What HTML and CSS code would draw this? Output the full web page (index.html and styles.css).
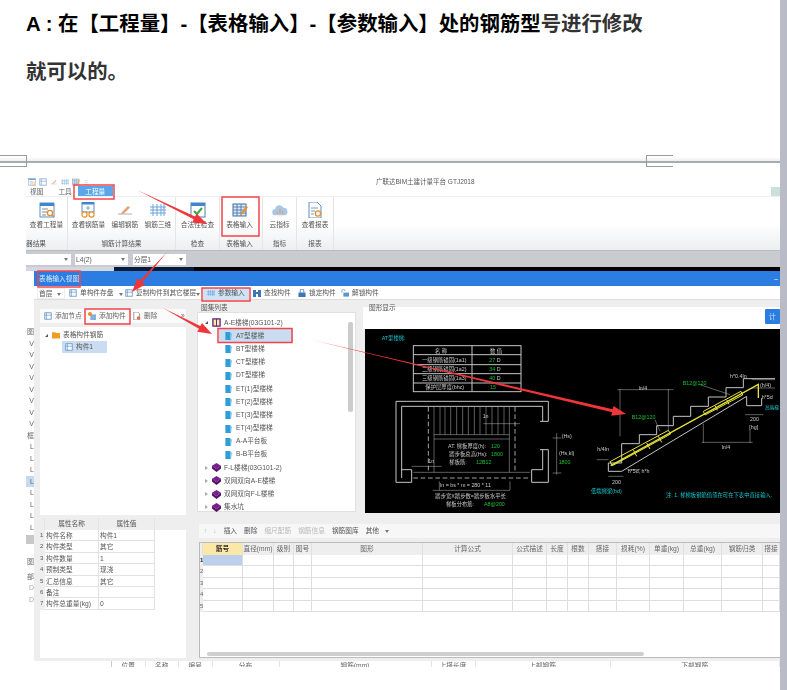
FILE: index.html
```html
<!DOCTYPE html>
<html lang="zh-CN">
<head>
<meta charset="utf-8">
<title>表格输入</title>
<link rel="stylesheet" href="styles.css">
</head>
<body>
<svg class="defs" aria-hidden="true">
  <symbol id="i-table" viewBox="0 0 16 16"><rect x="1" y="1" width="14" height="14" fill="#fff" stroke="#5b8fc4"/><rect x="1" y="1" width="14" height="3" fill="#3f87cf"/><path d="M3 7h6M3 10h5M3 13h4" stroke="#7a8a9a"/><circle cx="11" cy="11" r="2.6" fill="none" stroke="#e8912d" stroke-width="1.4"/><path d="M13 13l2 2" stroke="#e8912d" stroke-width="1.4"/></symbol>
  <symbol id="i-glasses" viewBox="0 0 16 16"><rect x="2" y="0" width="12" height="10" fill="#fff" stroke="#5b8fc4"/><rect x="2" y="0" width="12" height="2.5" fill="#3f87cf"/><path d="M8 4v4M6 6h4" stroke="#8aa"/><circle cx="4.5" cy="12.5" r="2.6" fill="#fff" stroke="#e8912d" stroke-width="1.2"/><circle cx="11.5" cy="12.5" r="2.6" fill="#fff" stroke="#e8912d" stroke-width="1.2"/></symbol>
  <symbol id="i-edit" viewBox="0 0 16 16"><path d="M1 12h14" stroke="#bbb" stroke-width="1.2"/><path d="M5 10l6-6 2 1.6-6 6-3 .6z" fill="#e8a070"/></symbol>
  <symbol id="i-3d" viewBox="0 0 16 16"><path d="M0 5h16M0 8h16M0 11h16M3 2v12M7 2v12M11 2v12M14 2v12" stroke="#6aa3da" fill="none"/></symbol>
  <symbol id="i-check" viewBox="0 0 16 16"><rect x="1" y="1" width="14" height="14" fill="#fff" stroke="#4f7fae"/><rect x="1" y="1" width="14" height="3" fill="#3f87cf"/><path d="M4 9l3 3 5-6" fill="none" stroke="#3aa64a" stroke-width="2"/></symbol>
  <symbol id="i-input" viewBox="0 0 16 16"><rect x="1" y="2" width="13" height="12" fill="#dbe8f5" stroke="#3f6fa3"/><path d="M1 5h13M1 8h13M1 11h13M5 2v12M9 2v12" stroke="#3f6fa3" stroke-width=".8"/><path d="M9 11l5-7 2 1-5 7-2.400 .6z" fill="#e8912d"/></symbol>
  <symbol id="i-cloud" viewBox="0 0 18 14"><path d="M4 13a3.500 3.500 0 0 1-.5-7 5 5 0 0 1 9.500-1.500 4.300 4.300 0 0 1 1 8.500z" fill="#a9c8e8"/><path d="M6 11V9M9 11V6M12 11V8" stroke="#e89a5a" stroke-width="1.400"/></symbol>
  <symbol id="i-report" viewBox="0 0 16 16"><path d="M2 0h8l4 4v12H2z" fill="#fff" stroke="#5b8fc4"/><path d="M4 6h7M4 9h4M4 12h3" stroke="#7a9abb"/><circle cx="11" cy="11.500" r="2.600" fill="none" stroke="#e8912d" stroke-width="1.400"/></symbol>
  <symbol id="i-doc" viewBox="0 0 10 10"><rect x="1" y="1" width="8" height="8" fill="#fff" stroke="#5b8fc4"/><path d="M3 1v8M1 4h8" stroke="#5b8fc4" stroke-width=".8"/></symbol>
  <symbol id="i-add" viewBox="0 0 10 10"><rect x="3" y="3" width="7" height="7" fill="#7fb0e0"/><circle cx="2.500" cy="2.500" r="2.500" fill="#ed8a22"/></symbol>
  <symbol id="i-del" viewBox="0 0 10 10"><path d="M1 0h5l2 2v8H1z" fill="#fff" stroke="#888"/><circle cx="7" cy="7.500" r="2.300" fill="#e5704e"/></symbol>
  <symbol id="i-folder" viewBox="0 0 10 9"><path d="M0 1h4l1 1h5v7H0z" fill="#f59b23"/></symbol>
  <symbol id="i-page" viewBox="0 0 9 10"><path d="M1 1h5l2 2-1 7H1z" fill="#2f9ed8"/><path d="M7 2v7" stroke="#9bd4ee"/></symbol>
  <symbol id="i-book" viewBox="0 0 10 10"><path d="M0 3l5-3 5 3-5 4z" fill="#7a1f8f"/><path d="M0 3v3l5 4 5-4V3L5 7z" fill="#541066"/></symbol>
  <symbol id="i-open" viewBox="0 0 10 10"><rect x="1" y="1" width="8" height="8" fill="#f6e9a8" stroke="#5b1a78" stroke-width="1.400"/><path d="M5 1v8" stroke="#5b1a78"/></symbol>
  <symbol id="i-find" viewBox="0 0 8 8"><rect x="0" y="1" width="3" height="7" fill="#3c76b6"/><rect x="5" y="1" width="3" height="7" fill="#3c76b6"/><rect x="2" y="3" width="4" height="2" fill="#3c76b6"/></symbol>
  <symbol id="i-lock" viewBox="0 0 8 9"><rect x="0" y="4" width="8" height="5" fill="#3c76b6"/><path d="M2 4V2a2 2 0 0 1 4 0v2" fill="none" stroke="#3c76b6"/></symbol>
  <symbol id="i-unlock" viewBox="0 0 10 9"><rect x="3" y="4" width="7" height="5" fill="#5d95cf"/><path d="M1 4V2a2 2 0 0 1 4 0" fill="none" stroke="#5d95cf"/></symbol>
</svg>

<div class="window">
  <main class="main">
    <section class="answer">
      <p class="line"><b class="strong">A : 在【工程量】-【表格输入】-【参数输入】处的钢筋型</b><b class="soft">号进行修改</b></p>
      <p class="line"><b class="soft">就可以的。</b></p>
    </section>

    <div class="page-break">
      <span class="corner"></span>
      <span class="corner corner-right"></span>
    </div>

    <figure class="shot">
      <div class="qbar">
        <div class="qicons">
          <svg class="qi"><use href="#i-table"/></svg>
          <svg class="qi"><use href="#i-doc"/></svg>
          <svg class="qi"><use href="#i-edit"/></svg>
          <svg class="qi"><use href="#i-3d"/></svg>
          <svg class="qi"><use href="#i-input"/></svg>
          <span class="qmore">⋮</span>
        </div>
        <span class="apptitle">广联达BIM土建计量平台 GTJ2018</span>
      </div>

      <div class="tabs">
        <span class="tab">视图</span>
        <span class="tab tab-tool">工具</span>
        <span class="tab tab-on">工程量</span>
        <span class="tab-flag"></span>
      </div>

      <div class="ribbon">
        <div class="rgroup g1">
          <div class="ritems"><div class="ritem"><svg class="ri"><use href="#i-table"/></svg><span>查看工程量</span></div></div>
          <div class="rtitle rtitle-left">器结果</div>
        </div>
        <div class="rgroup g2">
          <div class="ritems">
            <div class="ritem"><svg class="ri"><use href="#i-glasses"/></svg><span>查看钢筋量</span></div>
            <div class="ritem"><svg class="ri"><use href="#i-edit"/></svg><span>编辑钢筋</span></div>
            <div class="ritem"><svg class="ri"><use href="#i-3d"/></svg><span>钢筋三维</span></div>
          </div>
          <div class="rtitle">钢筋计算结果</div>
        </div>
        <div class="rgroup g3">
          <div class="ritems"><div class="ritem"><svg class="ri"><use href="#i-check"/></svg><span>合法性检查</span></div></div>
          <div class="rtitle">检查</div>
        </div>
        <div class="rgroup g4">
          <div class="ritems"><div class="ritem"><svg class="ri"><use href="#i-input"/></svg><span>表格输入</span></div></div>
          <div class="rtitle">表格输入</div>
        </div>
        <div class="rgroup g5">
          <div class="ritems"><div class="ritem"><svg class="ri"><use href="#i-cloud"/></svg><span>云指标</span></div></div>
          <div class="rtitle">指标</div>
        </div>
        <div class="rgroup g6">
          <div class="ritems"><div class="ritem"><svg class="ri"><use href="#i-report"/></svg><span>查看报表</span></div></div>
          <div class="rtitle">报表</div>
        </div>
      </div>

      <div class="combos">
        <span class="combo c1"><i class="caret"></i></span>
        <span class="combo c2">L4(2)<i class="caret"></i></span>
        <span class="combo c3">分层1<i class="caret"></i></span>
      </div>
      <div class="strip"><span class="s1"></span><span class="s2"></span><span class="s3"></span></div>

      <div class="work">
        <div class="side">
          <span class="side-a">图</span>
          <span>V</span><span>V</span><span>V</span><span>V</span><span>V</span><span>V</span><span>V</span><span>V</span>
          <span>框</span>
          <span>L</span><span>L</span><span>L</span><span class="side-on">L</span><span>L</span><span>L</span><span>L</span><span>L</span>
          <span class="side-bar"></span>
          <span class="side-b">图</span>
          <span class="side-c">部</span>
          <span class="side-d">D</span>
          <span class="side-d">D</span>
        </div>

        <div class="dialog">
          <div class="dtitle"><span>表格输入视图</span><span class="dmin">–</span></div>
          <div class="dtools">
            <span class="dcombo">首层<i class="caret"></i></span>
            <span class="dt dt1"><svg class="si"><use href="#i-doc"/></svg>单构件存盘<i class="caret caret-far"></i></span>
            <span class="dt dt2"><svg class="si"><use href="#i-doc"/></svg>复制构件到其它楼层<i class="caret"></i></span>
            <span class="dt dt3"><svg class="si"><use href="#i-3d"/></svg>参数输入</span>
            <span class="dt dt4"><svg class="si"><use href="#i-find"/></svg>查找构件</span>
            <span class="dt dt5"><svg class="si"><use href="#i-lock"/></svg>锁定构件</span>
            <span class="dt dt6"><svg class="si"><use href="#i-unlock"/></svg>解锁构件</span>
          </div>

          <div class="dbody">
            <div class="leftcol">
              <div class="ltools">
                <span class="lt"><svg class="si"><use href="#i-doc"/></svg>添加节点</span>
                <span class="lt lt2"><svg class="si"><use href="#i-add"/></svg>添加构件</span>
                <span class="lt lt3"><svg class="si"><use href="#i-del"/></svg>删除</span>
                <span class="lmore">»</span>
              </div>
              <div class="ltree">
                <div class="lrow"><i class="tri-open"></i><svg class="si"><use href="#i-folder"/></svg>表格构件钢筋</div>
                <div class="lrow lrow-sel"><svg class="si"><use href="#i-doc"/></svg>构件1</div>
              </div>
              <div class="props">
                <div class="p-h"></div><div class="p-h">属性名称</div><div class="p-h">属性值</div><div class="p-h p-end"></div>
                <div class="p-n">1</div><div class="p-c">构件名称</div><div class="p-c">构件1</div><div class="p-e"></div>
                <div class="p-n">2</div><div class="p-c">构件类型</div><div class="p-c">其它</div><div class="p-e"></div>
                <div class="p-n">3</div><div class="p-c">构件数量</div><div class="p-c">1</div><div class="p-e"></div>
                <div class="p-n">4</div><div class="p-c">预制类型</div><div class="p-c">现浇</div><div class="p-e"></div>
                <div class="p-n">5</div><div class="p-c">汇总信息</div><div class="p-c">其它</div><div class="p-e"></div>
                <div class="p-n">6</div><div class="p-c">备注</div><div class="p-c"></div><div class="p-e"></div>
                <div class="p-n">7</div><div class="p-c">构件总重量(kg)</div><div class="p-c">0</div><div class="p-e"></div>
              </div>
            </div>

            <div class="rightcol">
              <div class="upper">
                <div class="atlas">
                  <div class="legend">图集列表</div>
                  <div class="atlas-list">
                    <div class="arow arow-top"><i class="tri-open"></i><svg class="si"><use href="#i-open"/></svg>A-E楼梯(03G101-2)</div>
                    <div class="arow arow-leaf arow-sel"><svg class="si"><use href="#i-page"/></svg>AT型楼梯</div>
                    <div class="arow arow-leaf"><svg class="si"><use href="#i-page"/></svg>BT型楼梯</div>
                    <div class="arow arow-leaf"><svg class="si"><use href="#i-page"/></svg>CT型楼梯</div>
                    <div class="arow arow-leaf"><svg class="si"><use href="#i-page"/></svg>DT型楼梯</div>
                    <div class="arow arow-leaf"><svg class="si"><use href="#i-page"/></svg>ET(1)型楼梯</div>
                    <div class="arow arow-leaf"><svg class="si"><use href="#i-page"/></svg>ET(2)型楼梯</div>
                    <div class="arow arow-leaf"><svg class="si"><use href="#i-page"/></svg>ET(3)型楼梯</div>
                    <div class="arow arow-leaf"><svg class="si"><use href="#i-page"/></svg>ET(4)型楼梯</div>
                    <div class="arow arow-leaf"><svg class="si"><use href="#i-page"/></svg>A-A平台板</div>
                    <div class="arow arow-leaf"><svg class="si"><use href="#i-page"/></svg>B-B平台板</div>
                    <div class="arow arow-top"><i class="tri-closed"></i><svg class="si"><use href="#i-book"/></svg>F-L楼梯(03G101-2)</div>
                    <div class="arow arow-top"><i class="tri-closed"></i><svg class="si"><use href="#i-book"/></svg>双网双向A-E楼梯</div>
                    <div class="arow arow-top"><i class="tri-closed"></i><svg class="si"><use href="#i-book"/></svg>双网双向F-L楼梯</div>
                    <div class="arow arow-top"><i class="tri-closed"></i><svg class="si"><use href="#i-book"/></svg>集水坑</div>
                    <span class="vscroll"></span>
                  </div>
                </div>

                <div class="figure">
                  <div class="legend legend-fig">图形显示</div>
                  <div class="figbar"><span class="figbtn">计</span></div>
                  <svg class="cad" viewBox="15 88 1245 552" preserveAspectRatio="none">
                    <g class="cad-w">
                      <rect x="160" y="138" width="323" height="138"/>
                      <path d="M160 165H483M160 195H483M160 222H483M160 250H483M336 138V276"/>
                      <path d="M108 548V305H565V365M125 535V320H548V365M108 548H155V510H125M565 450V548H515V510H548V450M540 365H565M540 450H565"/>
                      <path class="thin" d="M222 322V518M222 405H448M222 418H448M240 322V405M255 322V405M272 322V405M290 322V405M308 322V405M325 322V405M343 322V405M360 322V405M378 322V405M396 322V405M414 322V405M432 322V405M448 322V518M160 518H510"/>
                      <path class="dash" d="M205 322V518M465 322V518M160 535H510"/>
                      <path class="thin" d="M370 372H480M155 500H245M218 572H450M238 545V572M450 545V572M590 400V525M578 415H604M578 520H604"/>
                      <path d="M745 515V490H785V432H838V405H890V378H940V350H992V320H1045V292H1098V264H1150V237H1245"/>
                      <path d="M745 515H785L1160 290V318H1205V295"/>
                      <path class="thin" d="M780 268V410M925 268V395M772 270H940M1030 372V430M1170 390V430M1025 428H1178M745 530H790M1155 345H1210M1175 240H1245M1175 265H1245M885 360L900 395M1020 255L1110 285M710 480H745M800 510H840"/>
                    </g>
                    <path class="cad-y" d="M752 498L1195 254V295"/>
                    <path class="cad-yb" d="M750 486L925 392L932 403L757 498ZM785 480L790 476M820 450L830 470M860 430L870 448M895 410L905 428M1030 335L1143 275L1148 286L1035 346ZM1065 318L1072 332M1100 300L1107 314"/>
                    <g class="cad-t">
                      <text class="c-cy" x="65" y="122">AT型楼梯:</text>
                      <text x="225" y="160">名 称</text><text x="390" y="160">数 值</text>
                      <text x="186" y="188">一级钢筋锚固(1a1)</text><text class="c-gr" x="388" y="188">27</text><text x="410" y="188">D</text>
                      <text x="186" y="215">二级钢筋锚固(1a2)</text><text class="c-gr" x="388" y="215">34</text><text x="410" y="215">D</text>
                      <text x="186" y="242">三级钢筋锚固(1a3)</text><text class="c-gr" x="388" y="242">40</text><text x="410" y="242">D</text>
                      <text x="196" y="269">保护层厚度(bhc)</text><text class="c-gr" x="390" y="269">15</text>
                      <text x="264" y="446">AT. 梯板厚度(h):</text><text class="c-gr" x="393" y="446">120</text>
                      <text x="268" y="470">踏步板总高(Hs):</text><text class="c-gr" x="393" y="470">1800</text>
                      <text x="268" y="494">梯板筋:</text><text class="c-gr" x="348" y="494">12B12</text>
                      <text x="240" y="562">ln = bs * m = 280 * 11</text>
                      <text x="226" y="595">踏步宽X踏步数=踏步板水平长</text>
                      <text x="258" y="620">梯板分布筋:</text><text class="c-gr" x="372" y="620">A8@200</text>
                      <text x="605" y="416">(Hs)</text><text x="597" y="465">(Hs,kl)</text><text class="c-gr" x="596" y="492">1800</text>
                      <text x="205" y="490">1n</text><text x="368" y="356">1n</text>
                      <text class="c-gr" x="815" y="357">B12@120</text><text class="c-gr" x="968" y="256">B12@120</text>
                      <text x="836" y="270">ln/4</text><text x="1085" y="448">ln/4</text>
                      <text x="1110" y="235">h*0.4ln</text><text x="1200" y="262">(h/4)</text><text x="1205" y="298">h*5d</text>
                      <text x="712" y="453">h/4ln</text><text x="803" y="521">h*5d, h*h</text>
                      <text x="756" y="552">200</text><text x="1170" y="364">200</text><text x="1168" y="388">[hg]</text>
                      <text class="c-cy" x="693" y="580">低端梯梁(bd)</text>
                      <text class="c-cy c-short" x="1215" y="329">高端梯</text>
                      <text class="c-cy" x="918" y="592">注: 1. 梯梯板钢筋值须在可在下表中直接输入.</text>
                    </g>
                  </svg>
                </div>
              </div>

              <div class="gtools">
                <span class="gt g-arrow">↑</span><span class="gt g-arrow">↓</span>
                <span class="gt g-first">插入</span><span class="gt">删除</span>
                <span class="gt g-off">缩尺配筋</span><span class="gt g-off">钢筋信息</span>
                <span class="gt">钢筋图库</span><span class="gt">其他 <i class="caret caret-near"></i></span>
              </div>

              <div class="sheet">
                <div class="sgrid">
                  <div class="sh"></div><div class="sh sh-on">筋号</div><div class="sh">直径(mm)</div><div class="sh">级别</div><div class="sh">图号</div><div class="sh">图形</div><div class="sh">计算公式</div><div class="sh">公式描述</div><div class="sh">长度</div><div class="sh">根数</div><div class="sh">搭接</div><div class="sh">损耗(%)</div><div class="sh">单重(kg)</div><div class="sh">总重(kg)</div><div class="sh">钢筋归类</div><div class="sh">搭接</div>
                  <div class="sn sn-on">1</div><div class="sc sc-on"></div><div class="sc"></div><div class="sc"></div><div class="sc"></div><div class="sc"></div><div class="sc"></div><div class="sc"></div><div class="sc"></div><div class="sc"></div><div class="sc"></div><div class="sc"></div><div class="sc"></div><div class="sc"></div><div class="sc"></div><div class="sc"></div>
                  <div class="sn">2</div><div class="sc"></div><div class="sc"></div><div class="sc"></div><div class="sc"></div><div class="sc"></div><div class="sc"></div><div class="sc"></div><div class="sc"></div><div class="sc"></div><div class="sc"></div><div class="sc"></div><div class="sc"></div><div class="sc"></div><div class="sc"></div><div class="sc"></div>
                  <div class="sn">3</div><div class="sc"></div><div class="sc"></div><div class="sc"></div><div class="sc"></div><div class="sc"></div><div class="sc"></div><div class="sc"></div><div class="sc"></div><div class="sc"></div><div class="sc"></div><div class="sc"></div><div class="sc"></div><div class="sc"></div><div class="sc"></div><div class="sc"></div>
                  <div class="sn">4</div><div class="sc"></div><div class="sc"></div><div class="sc"></div><div class="sc"></div><div class="sc"></div><div class="sc"></div><div class="sc"></div><div class="sc"></div><div class="sc"></div><div class="sc"></div><div class="sc"></div><div class="sc"></div><div class="sc"></div><div class="sc"></div><div class="sc"></div>
                  <div class="sn">5</div><div class="sc"></div><div class="sc"></div><div class="sc"></div><div class="sc"></div><div class="sc"></div><div class="sc"></div><div class="sc"></div><div class="sc"></div><div class="sc"></div><div class="sc"></div><div class="sc"></div><div class="sc"></div><div class="sc"></div><div class="sc"></div><div class="sc"></div>
                </div>
                <div class="hscroll"></div>
              </div>
            </div>
          </div>
        </div>
      </div>

      <div class="under">
        <span class="u u1">位置</span><span class="u u1">名称</span><span class="u u1">编号</span>
        <span class="u u2">分布</span><span class="u u3">钢筋(mm)</span><span class="u u4">上搭长度</span><span class="u u5">上部钢筋</span><span class="u u6">下部钢筋</span>
      </div>

      <svg class="marks" viewBox="26 163 754 504" aria-hidden="true">
        <g class="box">
          <rect x="74" y="185" width="40" height="14"/>
          <rect x="222" y="197" width="37" height="39"/>
          <rect x="38" y="271" width="42" height="16"/>
          <rect x="202" y="288" width="48" height="13"/>
          <rect x="85" y="309" width="45" height="15"/>
          <rect x="218" y="328.500" width="74" height="14"/>
        </g>
        <g class="arrow">
          <polygon points="137,190 195,216.500 196.600,213.400 207,224 192.200,222.400 193.700,219.300"/>
          <polygon points="167,252 142.300,282.500 145,284.800 132,292 137.400,278.200 140.100,280.500"/>
          <polygon points="163,308 200.300,326 202,323 212,334 197.300,331.800 198.900,328.700"/>
          <polygon points="312,340 612.700,409.300 613.500,405.900 626,414 611.200,415.700 612.100,412.300"/>
        </g>
      </svg>
    </figure>
  </main>
  <aside class="rail"></aside>
</div>
</body>
</html>
```
FILE: styles.css
```css
* { box-sizing: border-box; }
html, body { margin: 0; padding: 0; background: #fff; overflow: hidden; }
body { font-family: "Liberation Sans", "Noto Sans CJK SC", sans-serif; color: #444; }
.defs { position: absolute; width: 0; height: 0; }
.window { display: flex; width: 787px; height: 690px; overflow: hidden; }
.main { width: 780px; flex: none; overflow: hidden; }
.rail { width: 7px; flex: none; background: #b9bbc7; }

.answer { height: 157px; padding: 0 0 0 26px; }
.line { margin: 0; height: 48px; line-height: 48px; font-size: 20.400px; white-space: nowrap; }
.strong { color: #000; font-weight: 700; }
.soft { color: #333; font-weight: 700; }

.page-break { position: relative; z-index: 1; height: 6px; border-bottom: 2px solid #a9abb3; background: linear-gradient(#fff, #eee); }
.corner { position: absolute; left: 0; top: -2px; width: 27px; height: 12px; border: 1px solid #9a9a9a; border-left: 0; }
.corner-right { left: 646px; border-left: 1px solid #9a9a9a; border-right: 0; }

.shot { position: relative; margin: 0 0 0 26px; width: 754px; height: 504px; overflow: hidden; filter: blur(.7px); font-size: 6.7px; line-height: 8px; white-space: nowrap; background: #fff; }
.marks { position: absolute; left: 0; top: 0; width: 754px; height: 504px; }
.box rect { fill: none; stroke: #f2454a; stroke-width: 1.500; }
.arrow polygon { fill: #f0353b; }

.qbar { height: 23px; padding: 14px 0 0 2px; display: flex; }
.qicons { display: flex; gap: 3px; align-items: center; width: 348px; height: 9px; opacity: .75; }
.qi { width: 8px; height: 8px; }
.qmore { font-size: 6px; color: #777; }
.apptitle { color: #555; font-size: 6.500px; line-height: 9px; }

.tabs { display: flex; position: relative; height: 11px; padding-left: 4px; border-bottom: 1px solid #eceff0; line-height: 11px; color: #666; }
.tab-tool { margin-left: 15px; }
.tab-on { margin-left: 6px; width: 35px; text-align: center; color: #fff; background: #5ba6ea; }
.tab-flag { position: absolute; right: 0; top: 1px; width: 9px; height: 9px; background: #c9e1d8; }

.ribbon { display: flex; height: 54px; border-bottom: 1px solid #b9bcbf; background: linear-gradient(#fff 0, #fff 50%, #eceef0 100%); }
.rgroup { display: flex; flex-direction: column; justify-content: space-between; border-right: 1px solid #e3e5e7; padding-top: 5px; }
.ritems { display: flex; gap: 6.300px; justify-content: center; }
.ritem { display: flex; flex-direction: column; align-items: center; gap: 3px; color: #555; }
.ri { width: 16px; height: 16px; }
.rtitle { height: 10px; text-align: center; color: #555; }
.rtitle-left { text-align: left; }
.g1 { width: 42px; }
.g2 { width: 108px; }
.g3 { width: 44px; }
.g4 { width: 43px; padding-right: 3px; }
.g5 { width: 34px; }
.g6 { width: 37px; }

.combos { display: flex; height: 16px; padding-top: 3px; gap: 4px; background: #c8cbd0; }
.combo { position: relative; height: 11px; padding-left: 1px; background: #fff; line-height: 11px; color: #555; }
.c1 { width: 45px; }
.c2 { width: 53px; }
.c3 { width: 53px; margin-left: 1px; }
.caret { position: absolute; right: 3px; top: 4px; border: 2px solid transparent; border-top: 3px solid #777; border-bottom: 0; }

.strip { display: flex; height: 4px; }
.s1 { width: 88px; background: #d4d8de; }
.s2 { width: 80px; background: #0c1a3a; }
.s3 { flex: 1; background: #000; }

.work { display: flex; height: 390px; }
.side { width: 8px; flex: none; display: flex; flex-direction: column; padding-top: 55px; font-size: 7px; line-height: 11.500px; text-align: right; overflow: hidden; color: #666; }
.side span { display: block; height: 11.500px; flex: none; overflow: hidden; }
.side .side-on { background: #c5d9f1; }
.side .side-bar { height: 9px; margin-top: 2px; background: #c8c8c8; }
.side .side-b { margin-top: 12px; }
.side .side-c { margin-top: 3px; }
.side .side-d { margin-top: 0; color: #aaa; }

.dialog { width: 746px; flex: none; display: flex; flex-direction: column; background: #eeeeee; }
.dtitle { height: 15px; padding: 3px 0 0 5px; display: flex; justify-content: space-between; background: #2b7de1; color: #d9e8fa; line-height: 9px; }
.dmin { color: #fff; padding-right: 2px; }
.dtools { height: 14px; padding: 1px 0 0 3px; display: flex; align-items: center; background: #fff; border-bottom: 1px solid #ddd; color: #555; }
.dcombo { position: relative; width: 28px; height: 11px; padding: 1px 0 0 1px; border: 1px solid #eee; }
.dt { position: relative; display: flex; align-items: center; }
.si { width: 8px; height: 8px; margin-right: 3px; flex: none; }
.dt1 { margin-left: 4px; width: 56px; }
.dt1 .caret-far { right: 2px; }
.dt2 { width: 78px; }
.dt3 { margin-left: 0; width: 46px; height: 11px; padding-left: 4px; background: #cfe3f7; }
.dt4 { margin-left: 4px; width: 45px; }
.dt5 { width: 43px; }
.dt6 { width: 44px; }

.dbody { flex: 1; display: flex; gap: 9px; padding: 0 0 3px 6px; min-height: 0; }
.leftcol { width: 146px; flex: none; display: flex; flex-direction: column; padding-top: 9px; }
.ltools { height: 14px; display: flex; align-items: center; padding-left: 4px; background: #fbfbfb; color: #666; position: relative; }
.lt { display: flex; align-items: center; width: 44px; }
.lt2 { width: 45px; }
.lt3 { width: 30px; }
.lmore { margin-left: 18px; }
.ltree { height: 188px; margin-top: 4px; padding-top: 2px; background: #fff; }
.lrow { height: 12px; display: flex; align-items: center; padding-left: 5px; color: #555; }
.lrow .si { margin-right: 3px; }
.tri-open { width: 0; height: 0; margin-right: 4px; border-left: 3px solid transparent; border-bottom: 3px solid #555; }
.tri-closed { width: 0; height: 0; margin-right: 4px; border: 2.500px solid transparent; border-left: 3px solid #aaa; border-right: 0; }
.lrow-sel { width: 45px; margin-left: 22px; padding-left: 3px; background: #c9dcf2; }
.props { flex: 1; margin-top: 3px; display: grid; grid-template-columns: 5px 54px 56px 31px; grid-template-rows: 12px repeat(7, 11.400px) 1fr; background: #fff; color: #555; }
.p-h { background: #eee; text-align: center; line-height: 12px; border-right: 1px solid #e4e4e4; }
.p-end { border-right: 0; }
.p-n { background: #eee; font-size: 6px; line-height: 11.400px; overflow: hidden; }
.p-c { padding-left: 1px; line-height: 11px; border-right: 1px solid #e2e2e2; border-bottom: 1px solid #e2e2e2; }
.p-e { background: #fff; }

.rightcol { flex: 1; min-width: 0; display: flex; flex-direction: column; padding-top: 3px; }
.upper { height: 211px; display: flex; gap: 7px; }
.atlas { position: relative; width: 163px; padding: 9px 2px 2px; flex: none; }
.legend { position: absolute; left: 6px; top: 1px; color: #555; }
.atlas-list { position: relative; height: 200px; padding-top: 3px; background: #fff; border: 1px solid #e0e0e0; color: #555; }
.arow { height: 13.200px; display: flex; align-items: center; }
.arow-top { padding-left: 7px; }
.arow-leaf { padding-left: 26px; }
.arow .si { width: 9px; height: 9px; margin-right: 3px; }
.arow-sel { margin: 0 62px 0 21px; padding-left: 5px; background: #c9dcf2; }
.vscroll { position: absolute; left: 150px; top: 9px; width: 5px; height: 90px; background: #ccc; border-radius: 2px; }

.figure { position: relative; flex: 1; min-width: 0; display: flex; flex-direction: column; padding-top: 4px; }
.legend-fig { left: 4px; top: 1px; z-index: 1; }
.figbar { height: 22px; padding: 2px 0 0 402px; background: #fff; margin-left: -2px; }
.figbtn { display: block; width: 15px; height: 15px; padding: 4px 0 0 4px; background: #2b7de1; color: #cfe3f8; border-radius: 1px; }
.cad { display: block; width: 415px; height: 184px; background: #000; }
.cad-w { fill: none; stroke: #c4c4c4; stroke-width: 3; }
.cad-w .thin { stroke-width: 1.500; stroke: #bbb; }
.cad-w .dash { stroke-width: 2.500; stroke-dasharray: 14 8; }
.cad-y { fill: none; stroke: #e6e23a; stroke-width: 4; }
.cad-yb { fill: none; stroke: #e6e23a; stroke-width: 3; }
.cad-t text { font-size: 16px; fill: #c9c9c9; stroke: none; }
.cad-t .c-gr { fill: #19c530; }
.cad-t .c-cy { fill: #18c7cf; }
.cad-t .c-short { font-size: 14px; }

.gtools { height: 14px; margin: 10px 0 4px 4px; padding-left: 5px; display: flex; align-items: center; gap: 7px; background: #f7f7f7; color: #555; }
.g-arrow { color: #bbb; margin-right: -1px; }
.g-first { margin-left: 1px; }
.g-off { color: #b9b9b9; }
.caret-near { position: static; display: inline-block; vertical-align: middle; margin-left: 4px; }

.sheet { position: relative; flex: 1; margin-left: 4px; background: #fff; border: 1px solid #bbb; border-width: 1px 0 1px 1px; }
.sgrid { display: grid; grid-template-columns: 3px 40px 31px 20px 18px 111px 90px 34px 21px 21px 28px 33px 34px 38px 41px 17px; grid-template-rows: 11.500px repeat(5, 11.500px); color: #666; }
.sh { background: #eee; text-align: center; line-height: 11.500px; border-right: 1px solid #e0e0e0; overflow: hidden; }
.sh-on { background: #fce8a6; color: #333; font-weight: 700; }
.sc { border-right: 1px solid #dedede; border-bottom: 1px solid #dedede; }
.sc-on { background: #bcd0ee; }
.sn { background: #eee; font-size: 6px; line-height: 11.500px; overflow: visible; }
.sn-on { color: #222; font-weight: 700; }
.hscroll { position: absolute; left: 7px; bottom: 1px; width: 437px; height: 4px; background: #cfcfcf; border-radius: 2px; }

.under { height: 6px; margin-left: 85px; display: flex; overflow: hidden; border-left: 1px solid #ccc; color: #666; line-height: 10px; }
.u { display: block; text-align: center; border-right: 1px solid #e3e3e3; }
.u1 { width: 33.500px; }
.u2 { width: 67px; }
.u3 { width: 152px; }
.u4 { width: 44px; }
.u5 { width: 135px; }
.u6 { flex: 1; }
```
